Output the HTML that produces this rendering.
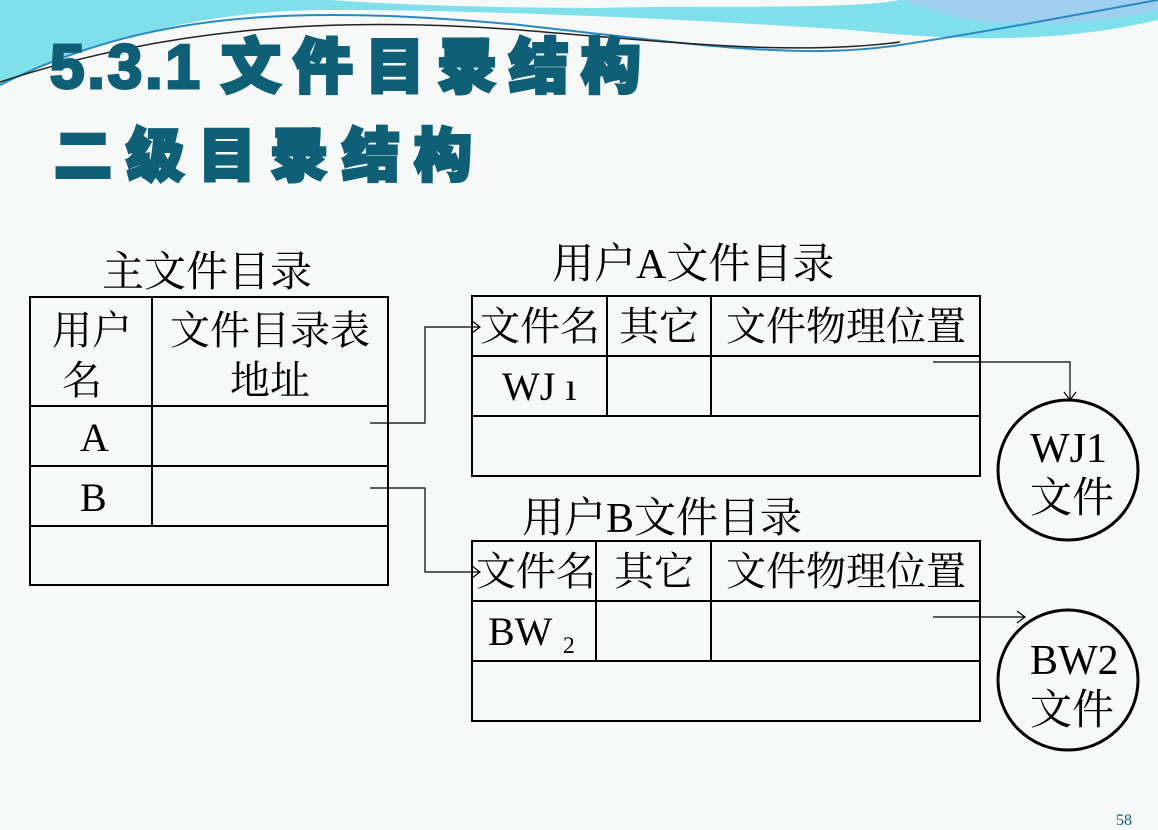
<!DOCTYPE html>
<html><head><meta charset="utf-8"><style>
body{margin:0;width:1158px;height:828px;overflow:hidden;background:#f7f8f8;position:relative;font-family:"Liberation Serif","Noto Serif CJK SC",serif}
.t{position:absolute;font-family:"Liberation Sans","Noto Sans CJK SC",sans-serif;font-weight:900;color:#0f5f76;-webkit-text-stroke:3px #0f5f76;white-space:nowrap;line-height:1}
.x{position:absolute;font-size:40px;color:#000;white-space:nowrap;line-height:1}
</style></head><body>
<svg width="1158" height="828" style="position:absolute;left:0;top:0">
<path d="M0 0 H1158 V20 C1050 45 950 40 850 30 C700 20 500 10 330 10 C200 10 100 40 0 85 Z" fill="#7fe0ec"/>
<path d="M330 0 H900 C850 10 700 5 600 8 C500 8 400 5 330 0Z" fill="#f7f8f8"/>
<path d="M900 0 H1158 V10 C1100 25 1000 30 950 15 Z" fill="#9fcfee"/>
<path d="M0 85 C150 10 300 5 520 25 C700 45 800 60 900 45 C1000 30 1100 10 1158 0" fill="none" stroke="#2a8ac0" stroke-width="2"/>
<path d="M0 82 C160 30 320 15 520 30 C700 45 800 55 900 42" fill="none" stroke="#222" stroke-width="1.5"/>
<g fill="none" stroke="#000" stroke-width="2">
<rect x="30" y="297" width="358" height="288"/>
<line x1="30" y1="406" x2="388" y2="406"/><line x1="30" y1="466" x2="388" y2="466"/><line x1="30" y1="526" x2="388" y2="526"/>
<line x1="152" y1="297" x2="152" y2="526"/>
<rect x="472" y="296" width="508" height="180"/>
<line x1="472" y1="356" x2="980" y2="356"/><line x1="472" y1="416" x2="980" y2="416"/>
<line x1="607" y1="296" x2="607" y2="416"/><line x1="711" y1="296" x2="711" y2="416"/>
<rect x="472" y="541" width="508" height="180"/>
<line x1="472" y1="601" x2="980" y2="601"/><line x1="472" y1="661" x2="980" y2="661"/>
<line x1="596" y1="541" x2="596" y2="661"/><line x1="711" y1="541" x2="711" y2="661"/>
<circle cx="1068" cy="470" r="70" stroke-width="3"/>
<circle cx="1068" cy="680" r="70" stroke-width="3"/>
</g>
<g fill="none" stroke="#000" stroke-width="1.2">
<path d="M370 423 H425 V327 H480 M472 321 L480 327 L472 333"/>
<path d="M370 488 H425 V572 H480 M472 566 L480 572 L472 578"/>
<path d="M933 362 H1070 V400 M1064 392 L1070 400 L1076 392"/>
<path d="M933 617 H1025 M1017 611 L1025 617 L1017 623"/>
</g>
</svg>
<div class="t" style="left:50px;top:37px;font-size:60px"><span style="letter-spacing:3px;font-size:62px">5.3.1</span><span style="letter-spacing:12px;margin-left:18px">文件目录结构</span></div>
<div class="t" style="left:54px;top:128px;font-size:58px;letter-spacing:14px">二级目录结构</div>
<div class="x" style="left:102px;top:252px;font-size:42px">主文件目录</div>
<div class="x" style="left:552px;top:244px;font-size:42px">用户A文件目录</div>
<div class="x" style="left:522px;top:498px;font-size:42px">用户B文件目录</div>
<div class="x" style="left:52px;top:306px;line-height:50px">用户<br>&nbsp;名</div>
<div class="x" style="left:170px;top:306px;line-height:50px">文件目录表<br>&nbsp;&nbsp;&nbsp;&nbsp;&nbsp;&nbsp;地址</div>
<div class="x" style="left:80px;top:418px">A</div>
<div class="x" style="left:80px;top:478px">B</div>
<div class="x" style="left:480px;top:307px">文件名</div>
<div class="x" style="left:619px;top:307px">其它</div>
<div class="x" style="left:726px;top:307px">文件物理位置</div>
<div class="x" style="left:502px;top:367px">WJ ı</div>
<div class="x" style="left:476px;top:552px">文件名</div>
<div class="x" style="left:614px;top:552px">其它</div>
<div class="x" style="left:726px;top:552px">文件物理位置</div>
<div class="x" style="left:488px;top:612px">BW ₂</div>
<div class="x" style="left:1030px;top:424px;line-height:50px;font-size:42px">WJ1<br>文件</div>
<div class="x" style="left:1030px;top:636px;line-height:50px;font-size:42px">BW2<br>文件</div>
<div style="position:absolute;left:1116px;top:812px;font-size:16px;color:#0f5f76">58</div>
</body></html>
